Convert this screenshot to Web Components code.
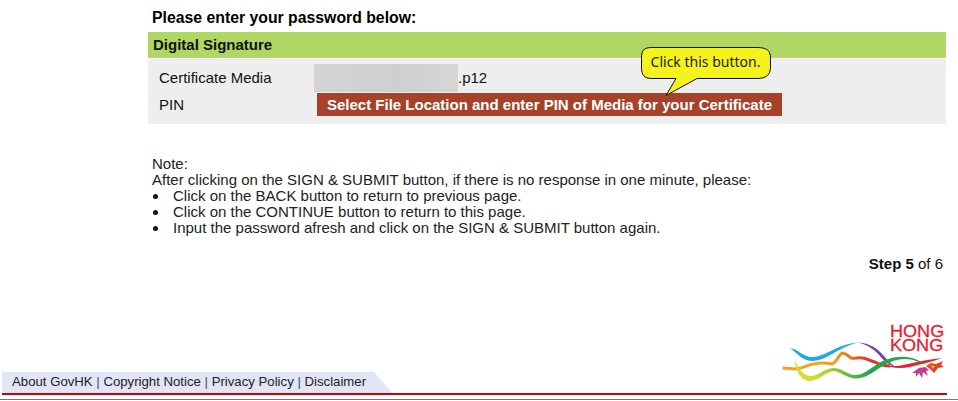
<!DOCTYPE html>
<html lang="en">
<head>
<meta charset="utf-8">
<title>Digital Signature</title>
<style>
  html, body { margin: 0; height: 401px; overflow: hidden; background: #fff; }
  body { font: 15px "Liberation Sans", Arial, sans-serif; color: #111; }
</style>
</head>
<body>
<sign-page>
  <sign-panel heading="Digital Signature"></sign-panel>
  <sign-note></sign-note>
</sign-page>

<script>
class SignPage extends HTMLElement {
  constructor() {
    super()
    this.attachShadow({ mode: 'open' })
    this.shadowRoot.innerHTML = `
      <style>
        :host { display: flex; flex-direction: column; height: 401px; }
        main { padding: 11px 12px 0 148px; flex: 1; }
        h1 { margin: 0 0 7px 4px; font-size: 15.800px; line-height: 14px; font-weight: bold; color: #000; }
        .step { margin-top: 20px; text-align: right; padding-right: 3px; line-height: 16px; }
        .step b { color: #111; }
      </style>
      <main>
        <h1>Please enter your password below:</h1>
        <slot></slot>
        <div class="step"><b>Step 5</b> of 6</div>
      </main>
      <sign-footer></sign-footer>
    `
  }
}

class SignPanel extends HTMLElement {
  constructor() {
    super()
    this.attachShadow({ mode: 'open' })
  }

  connectedCallback() {
    this.shadowRoot.innerHTML = `
      <style>
        :host { display: block; }
        .head { background: #b0d664; height: 26px; line-height: 26px; padding-left: 5px; font-weight: bold; color: #111; }
        .body { position: relative; margin-top: 1px; background: #eee; height: 65px; padding: 5px 0 0 11px; box-sizing: border-box; }
        .row { display: grid; grid-template-columns: 155px 1fr; align-items: center; }
        .row + .row { margin-top: 1px; }
        .label { padding-bottom: 1px; }
        .file { display: flex; align-items: center; height: 28px; }
        .file span { padding-bottom: 1px; }
        .file .blur { width: 144px; height: 28px; padding: 0; background: linear-gradient(90deg, #d4d4d4, #cfcfcf 60%, #d6d6d6); }
        button { display: block; margin-left: 3px; width: 465px; height: 23px; border: 0; padding: 0; background: #a64229; color: #fff; font: bold 15px "Liberation Sans", Arial, sans-serif; }
      </style>
      <div class="head">${this.getAttribute('heading')}</div>
      <div class="body">
        <div class="row">
          <span class="label">Certificate Media</span>
          <span class="file"><span class="blur"></span><span>.p12</span></span>
        </div>
        <div class="row">
          <span class="label">PIN</span>
          <span><button type="button">Select File Location and enter PIN of Media for your Certificate</button></span>
        </div>
        <sign-callout>Click this button.</sign-callout>
      </div>
    `
  }
}

class SignCallout extends HTMLElement {
  constructor() {
    super()
    this.attachShadow({ mode: 'open' })
    this.shadowRoot.innerHTML = `
      <style>
        :host { position: absolute; left: 491px; top: -12px; width: 134px; height: 50px; display: block; }
        svg { position: absolute; inset: 0; }
        span { position: absolute; left: 0; top: 0; width: 133px; height: 32px; text-align: center; font: 14px/29px "Noto Sans", sans-serif; color: #222; }
      </style>
      <svg width="134" height="50" viewBox="0 0 134 50">
        <path d="M13 .5H118C127 .5 131.500 3 131.500 11V20C131.500 28 127 31.500 118 31.500H58L27 48.500L37 31.500H13C5 31.500 2.500 28 2.500 20V11C2.500 3 5 .5 13 .5Z" fill="#f5f31c" stroke="#111" stroke-width="1"/>
      </svg>
      <span><slot></slot></span>
    `
  }
}

class SignNote extends HTMLElement {
  constructor() {
    super()
    this.attachShadow({ mode: 'open' })
    this.shadowRoot.innerHTML = `
      <style>
        :host { display: block; margin: 32px 0 0 4px; line-height: 16px; color: #222; }
        ul { margin: 0; padding: 0 0 0 21px; list-style: none; }
        li { position: relative; }
        li::before { content: ""; position: absolute; left: -20px; top: 6px; width: 5px; height: 5px; border-radius: 50%; background: #111; }
      </style>
      <div>Note:</div>
      <div>After clicking on the SIGN &amp; SUBMIT button, if there is no response in one minute, please:</div>
      <ul>
        <li>Click on the BACK button to return to previous page.</li>
        <li>Click on the CONTINUE button to return to this page.</li>
        <li>Input the password afresh and click on the SIGN &amp; SUBMIT button again.</li>
      </ul>
    `
  }
}

class SignFooter extends HTMLElement {
  constructor() {
    super()
    this.attachShadow({ mode: 'open' })
    this.shadowRoot.innerHTML = `
      <style>
        :host { display: block; height: 79px; }
        .top { display: flex; justify-content: space-between; align-items: flex-end; height: 71px; margin-left: 2px; width: 945px; position: relative; }
        .tab { height: 21px; width: 390px; background: #e2e5f6; clip-path: polygon(0 0, 372px 0, 100% 100%, 0 100%); box-sizing: border-box; padding-left: 10px; font-size: 13.200px; line-height: 19px; color: #222; white-space: nowrap; }
        .tab span { color: #2a5a8a; }
        hk-logo { position: absolute; right: 0; bottom: 1px; }
        .red { height: 2px; margin-left: 2px; width: 945px; background: #c8000a; }
        .gray { height: 1px; margin-top: 4px; background: #777; }
      </style>
      <div class="top">
        <div class="tab">About GovHK <span>|</span> Copyright Notice <span>|</span> Privacy Policy <span>|</span> Disclaimer</div>
        <hk-logo></hk-logo>
      </div>
      <div class="red"></div>
      <div class="gray"></div>
    `
  }
}

class HkLogo extends HTMLElement {
  constructor() {
    super()
    this.attachShadow({ mode: 'open' })
    this.shadowRoot.innerHTML = `
      <style>
        :host { display: block; width: 165px; height: 70px; }
        svg { display: block; }
        .name { position: absolute; left: 108px; top: 3px; width: 50px; font: 16px/14px "Liberation Sans", sans-serif; color: #e8202c; -webkit-text-stroke: .3px #e8202c; transform: scaleX(1.130); transform-origin: left top; }
      </style>
      <svg width="165" height="70" viewBox="782 322 165 70" fill="none">
        <defs>
          <linearGradient id="warm" gradientUnits="userSpaceOnUse" x1="835" y1="0" x2="870" y2="0">
            <stop offset="0" stop-color="#f6a01e"/><stop offset="1" stop-color="#e8301f"/>
          </linearGradient>
          <linearGradient id="leaf" gradientUnits="userSpaceOnUse" x1="815" y1="0" x2="868" y2="0">
            <stop offset="0" stop-color="#d3dd2c"/><stop offset="1" stop-color="#22a84a"/>
          </linearGradient>
          <linearGradient id="wing" gradientUnits="userSpaceOnUse" x1="912" y1="0" x2="930" y2="0">
            <stop offset="0" stop-color="#b83fa8"/><stop offset="1" stop-color="#d8307a"/>
          </linearGradient>
        </defs>
        <path d="M790 348C798 349 803 357 812 357C826 357 838 343 860 342.500C840 345 828 361 812 361C802 361 796 352 790 348Z" fill="#1cabe4"/>
        <path d="M858 342.500C870 343 878 349 884 356C889 362 893 366 899 368C892 367 886 363 880 356C875 350 868 345 858 342.500Z" fill="#7b3fa8"/>
        <path d="M782.500 368C790 368 796 371 804 367C812 363 824 362 832 364C836 363 838 356 842 353C846 353 848 356 851 358C855 359 858 357 862 358C867 358 870 361 875 362C880 365 884 366 890 366" stroke="url(#warm)" stroke-width="3" stroke-linejoin="round"/>
        <path d="M884 365C892 367 900 366 908 364C920 361 932 359 942 358C932 362 920 364 910 367C900 369 892 368 884 365Z" fill="#e8202c"/>
        <path d="M795 360C798 368 802 375 810 376C818 376 823 369 833 368C841 368 846 373 853 375C862 376 868 370 876 365C884 359 896 356 906 357C915 358 921 361 926 365C919 362 913 359 905 359C895 359 885 364 878 369C868 376 860 380 852 378C844 376 839 371 833 371C825 372 819 381 810 381C801 381 795 370 795 360Z" fill="url(#leaf)"/>
        <path d="M912 373L919 368L925 367L929 370L926 371L928 376L923 372L922 378L919 373L916 377L916 373Z" fill="url(#wing)"/>
        <path d="M926 366L931 363L936 364L943 361L941 365L944 367L938 368L934 373L930 369Z" fill="#e8402c"/>
        <path d="M930 365L935 366L933 369Z" fill="#f6b21e"/>
      </svg>
      <div class="name">HONG KONG</div>
    `
  }
}

customElements.define('sign-page', SignPage)
customElements.define('sign-panel', SignPanel)
customElements.define('sign-callout', SignCallout)
customElements.define('sign-note', SignNote)
customElements.define('sign-footer', SignFooter)
customElements.define('hk-logo', HkLogo)
</script>
</body>
</html>
